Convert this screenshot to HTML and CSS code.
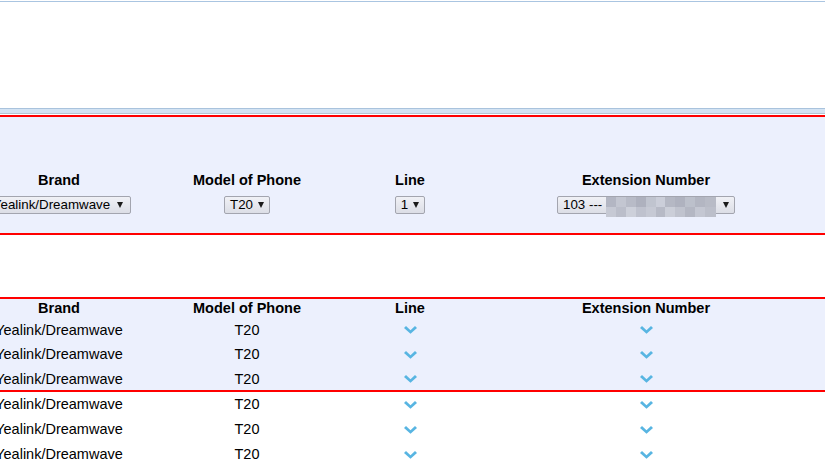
FILE: index.html
```html
<!DOCTYPE html>
<html>
<head>
<meta charset="utf-8">
<link rel="stylesheet" href="styles.css">
</head>
<body>
<div class="topline"></div>
<div class="blank"></div>
<div class="divider"></div>

<section class="picker">
  <div class="grid head">
    <div class="cell">Brand</div>
    <div class="cell">Model of Phone</div>
    <div class="cell">Line</div>
    <div class="cell">Extension Number</div>
    <div class="cell"></div>
  </div>
  <div class="grid controls">
    <div class="cell"><span class="select select-brand"><span>Yealink/Dreamwave</span><i class="arrow"></i></span></div>
    <div class="cell"><span class="select"><span>T20</span><i class="arrow"></i></span></div>
    <div class="cell"><span class="select"><span>1</span><i class="arrow"></i></span></div>
    <div class="cell"><span class="select select-ext"><span>103 ---&nbsp;</span><span class="mosaic"></span><i class="arrow"></i></span></div>
    <div class="cell"></div>
  </div>
</section>

<div class="gap"></div>

<section class="list">
  <div class="grid thead">
    <div class="cell">Brand</div>
    <div class="cell">Model of Phone</div>
    <div class="cell">Line</div>
    <div class="cell">Extension Number</div>
    <div class="cell"></div>
  </div>
  <div class="grid row">
    <div class="cell">Yealink/Dreamwave</div>
    <div class="cell">T20</div>
    <div class="cell"><svg class="chev" width="13" height="8" viewBox="0 0 13 8"><polygon points="0,2 2,0 6.5,4.2 11,0 13,2 6.5,7.8"/></svg></div>
    <div class="cell"><svg class="chev" width="13" height="8" viewBox="0 0 13 8"><polygon points="0,2 2,0 6.5,4.2 11,0 13,2 6.5,7.8"/></svg></div>
    <div class="cell"></div>
  </div>
  <div class="grid row">
    <div class="cell">Yealink/Dreamwave</div>
    <div class="cell">T20</div>
    <div class="cell"><svg class="chev" width="13" height="8" viewBox="0 0 13 8"><polygon points="0,2 2,0 6.5,4.2 11,0 13,2 6.5,7.8"/></svg></div>
    <div class="cell"><svg class="chev" width="13" height="8" viewBox="0 0 13 8"><polygon points="0,2 2,0 6.5,4.2 11,0 13,2 6.5,7.8"/></svg></div>
    <div class="cell"></div>
  </div>
  <div class="grid row">
    <div class="cell">Yealink/Dreamwave</div>
    <div class="cell">T20</div>
    <div class="cell"><svg class="chev" width="13" height="8" viewBox="0 0 13 8"><polygon points="0,2 2,0 6.5,4.2 11,0 13,2 6.5,7.8"/></svg></div>
    <div class="cell"><svg class="chev" width="13" height="8" viewBox="0 0 13 8"><polygon points="0,2 2,0 6.5,4.2 11,0 13,2 6.5,7.8"/></svg></div>
    <div class="cell"></div>
  </div>
</section>

<section class="rest">
  <div class="grid row2">
    <div class="cell">Yealink/Dreamwave</div>
    <div class="cell">T20</div>
    <div class="cell"><svg class="chev" width="13" height="8" viewBox="0 0 13 8"><polygon points="0,2 2,0 6.5,4.2 11,0 13,2 6.5,7.8"/></svg></div>
    <div class="cell"><svg class="chev" width="13" height="8" viewBox="0 0 13 8"><polygon points="0,2 2,0 6.5,4.2 11,0 13,2 6.5,7.8"/></svg></div>
    <div class="cell"></div>
  </div>
  <div class="grid row2">
    <div class="cell">Yealink/Dreamwave</div>
    <div class="cell">T20</div>
    <div class="cell"><svg class="chev" width="13" height="8" viewBox="0 0 13 8"><polygon points="0,2 2,0 6.5,4.2 11,0 13,2 6.5,7.8"/></svg></div>
    <div class="cell"><svg class="chev" width="13" height="8" viewBox="0 0 13 8"><polygon points="0,2 2,0 6.5,4.2 11,0 13,2 6.5,7.8"/></svg></div>
    <div class="cell"></div>
  </div>
  <div class="grid row2">
    <div class="cell">Yealink/Dreamwave</div>
    <div class="cell">T20</div>
    <div class="cell"><svg class="chev" width="13" height="8" viewBox="0 0 13 8"><polygon points="0,2 2,0 6.5,4.2 11,0 13,2 6.5,7.8"/></svg></div>
    <div class="cell"><svg class="chev" width="13" height="8" viewBox="0 0 13 8"><polygon points="0,2 2,0 6.5,4.2 11,0 13,2 6.5,7.8"/></svg></div>
    <div class="cell"></div>
  </div>
</section>
</body>
</html>
```
FILE: styles.css
```css
html, body {
  margin: 0;
  padding: 0;
  background: #ffffff;
  overflow: hidden;
}
body {
  font-family: "Liberation Sans", Arial, sans-serif;
  font-size: 14.5px;
  color: #000;
}
.topline {
  margin-top: 1px;
  height: 1px;
  background: #aac5e1;
}
.blank {
  height: 106px;
}
.divider {
  height: 4px;
  background: #d3e3f3;
  border-top: 1px solid #a9c3dd;
  border-bottom: 1px solid #b6c4d2;
  margin-bottom: 1px;
}
.grid {
  display: grid;
  grid-template-columns: 218px 158px 168px 304px 1fr;
  margin-left: -50px;
}
.cell {
  display: flex;
  align-items: center;
  justify-content: center;
  white-space: nowrap;
}
.picker {
  background: #ecf0fd;
  border-top: 2px solid #ff0000;
  border-bottom: 2px solid #ff0000;
  padding: 54px 0 19px;
}
.head, .thead {
  font-weight: bold;
  line-height: 18px;
  height: 18px;
}
.controls {
  margin-top: 7px;
  height: 18px;
}
.select {
  box-sizing: border-box;
  height: 18px;
  display: inline-flex;
  align-items: center;
  gap: 5px;
  padding: 0 5px 0 5px;
  border: 1px solid #a3a5af;
  border-radius: 2px;
  background: linear-gradient(#f0f1f6, #dcdee6);
  font-size: 13.33px;
  line-height: 16px;
  color: #000;
}
.select-brand {
  gap: 7px;
  padding-right: 7px;
}
.select-ext {
  gap: 0;
}
.select-ext .arrow {
  margin-left: 7px;
}
.arrow {
  display: block;
  width: 0;
  height: 0;
  border-left: 3px solid transparent;
  border-right: 3px solid transparent;
  border-top: 6px solid #1a1a1a;
  margin-top: -1px;
}
.mosaic {
  display: block;
  width: 110px;
  height: 20px;
  align-self: flex-start;
  margin-top: 0;
  background:
    linear-gradient(to right, #b3b6c3 0 9%, #c3c6d1 9% 18%, #b8bbc7 18% 27%, #aeb1be 27% 36%, #c0c4cf 36% 45%, #cbced9 45% 54%, #b5b8c4 54% 63%, #afb2bf 63% 72%, #bcc0cb 72% 81%, #b3b6c2 81% 90%, #b8bbc6 90% 100%) top / 100% 50% no-repeat,
    linear-gradient(to right, #c6c9d4 0 9%, #bbbeca 9% 18%, #cdd0da 18% 27%, #bfc2ce 27% 36%, #c6c9d4 36% 45%, #b7bac6 45% 54%, #cbced8 54% 63%, #c0c3ce 63% 72%, #b4b7c3 72% 81%, #c4c7d2 81% 90%, #bcbfca 90% 100%) bottom / 100% 50% no-repeat;
}
.gap {
  height: 62px;
}
.list {
  background: #ecf0fd;
  border-top: 2px solid #ff0000;
  border-bottom: 2px solid #ff0000;
}
.row {
  height: 24px;
  box-sizing: border-box;
  padding-top: 2px;
  line-height: 22px;
}
.row:nth-child(3) {
  height: 25px;
  line-height: 23px;
}
.row2 {
  height: 25px;
  box-sizing: border-box;
  line-height: 25px;
}
.chev {
  display: block;
  fill: #58b5e2;
}
```
